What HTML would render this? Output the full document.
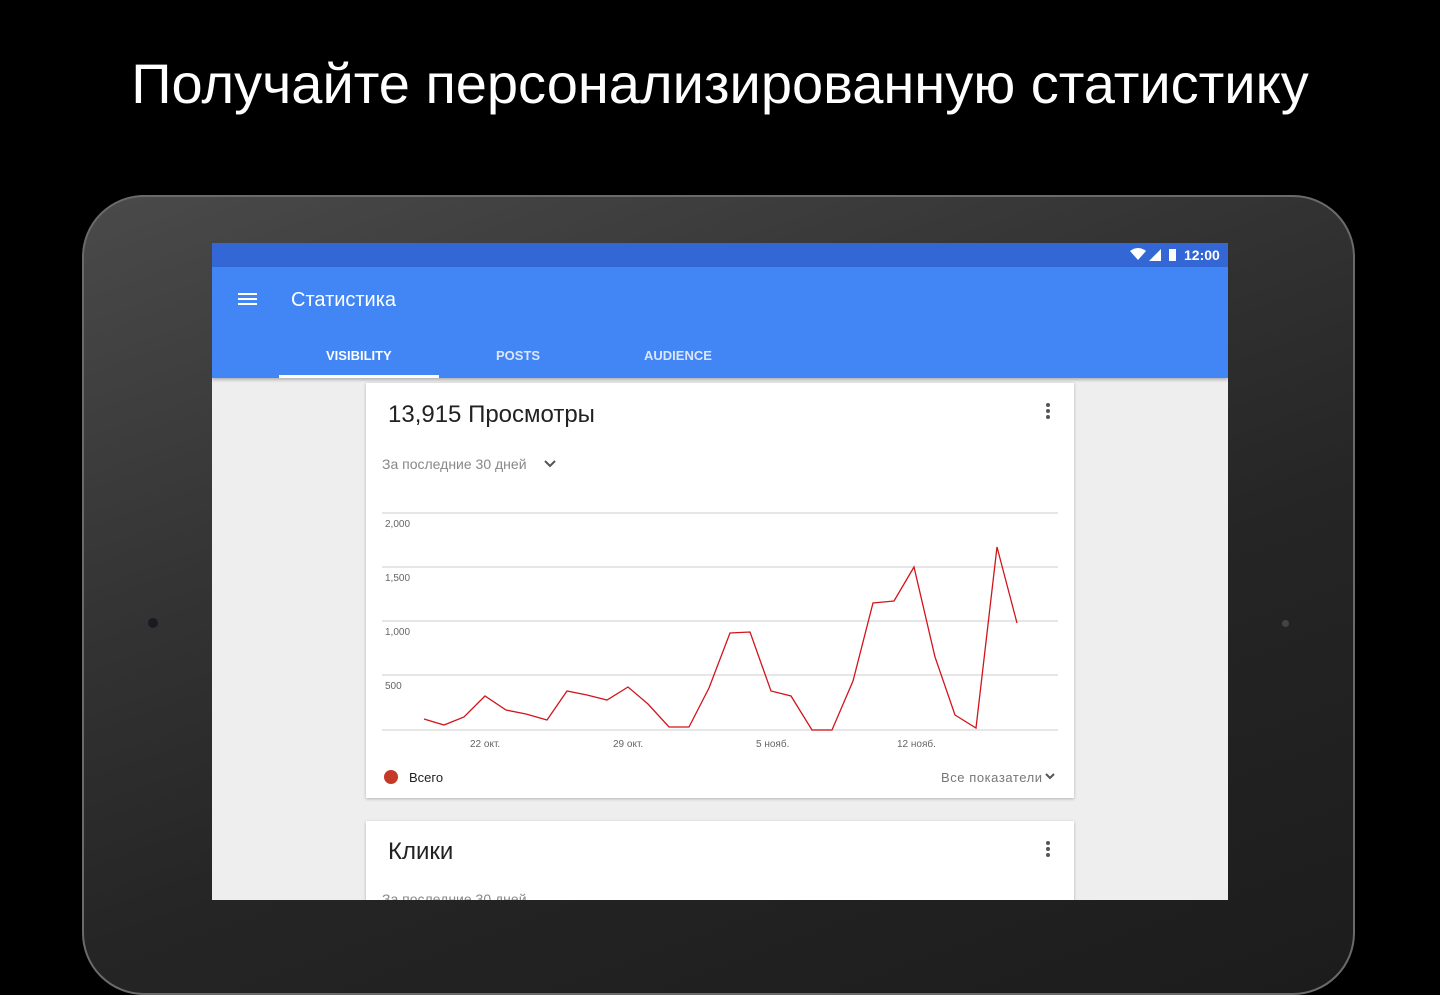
<!DOCTYPE html>
<html><head><meta charset="utf-8"><style>
*{margin:0;padding:0;box-sizing:border-box}
body{width:1440px;height:900px;overflow:hidden;background:#000;font-family:"Liberation Sans",sans-serif;position:relative}
.h{position:absolute;top:51px;left:0;width:1440px;text-align:center;color:#fff;font-size:56px;font-weight:300;letter-spacing:0px}
.tab{position:absolute;left:82px;top:195px;width:1273px;height:800px;border-radius:62px;background:linear-gradient(160deg,#4a4a4a 0%,#333 35%,#252525 60%,#1c1c1c 100%);border:2px solid #6a6a6a}
.scr{position:absolute;left:212px;top:243px;width:1016px;height:657px;background:#eee;overflow:hidden}
.sb{height:24px;background:#3367d6;position:relative}
.tb{height:111px;background:#4285f4;position:relative;box-shadow:0 2px 3px rgba(0,0,0,.25)}
.card{position:absolute;left:154px;width:708px;background:#fff;box-shadow:0 1px 3px rgba(0,0,0,.25)}
.t{position:absolute;color:#fff}
</style></head><body>
<div class="h">Получайте персонализированную статистику</div>
<div class="tab"></div>
<div style="position:absolute;left:147px;top:617px;width:12px;height:12px;border-radius:50%;background:#1a1a22;border:1px solid #333"></div>
<div style="position:absolute;left:1282px;top:620px;width:7px;height:7px;border-radius:50%;background:#444"></div>
<div class="scr">
 <div class="sb">
  <svg style="position:absolute;left:918px;top:5px" width="50" height="15"><path d="M0 3 Q8 -3 16 3 L8 12Z" fill="#fff"/><path d="M19 13 L31 1 L31 13Z" fill="#fff"/><rect x="39" y="1" width="7" height="12" fill="#fff"/></svg>
  <div class="t" style="left:972px;top:4px;font-size:14px;font-weight:bold">12:00</div>
 </div>
 <div class="tb">
  <div style="position:absolute;left:26px;top:26px;width:19px;height:2px;background:#fff;box-shadow:0 5px 0 #fff,0 10px 0 #fff"></div>
  <div class="t" style="left:79px;top:22px;font-size:20px">Статистика</div>
  <div class="t" style="left:114px;top:81px;font-size:13px;font-weight:bold">VISIBILITY</div>
  <div class="t" style="left:284px;top:81px;font-size:13px;font-weight:bold;color:#dbe6fd">POSTS</div>
  <div class="t" style="left:432px;top:81px;font-size:13px;font-weight:bold;color:#dbe6fd">AUDIENCE</div>
  <div style="position:absolute;left:67px;top:108px;width:160px;height:3px;background:#fff"></div>
 </div>
 <div class="card" style="top:140px;height:415px">
  <div style="position:absolute;left:22px;top:18px;font-size:24px;color:#222;font-weight:300">13,915 Просмотры</div>
  <div style="position:absolute;left:680px;top:20px;width:4px;height:4px;border-radius:50%;background:#555;box-shadow:0 6px 0 #555,0 12px 0 #555"></div>
  <div style="position:absolute;left:16px;top:73px;font-size:14px;color:#888">За последние 30 дней</div>
  <svg style="position:absolute;left:178px;top:77px" width="12" height="8"><path d="M1 1 L6 6 L11 1" stroke="#555" stroke-width="2" fill="none"/></svg>
 </div>
 <div class="card" style="top:578px;height:100px">
  <div style="position:absolute;left:22px;top:17px;font-size:24px;color:#222;font-weight:300">Клики</div>
  <div style="position:absolute;left:680px;top:20px;width:4px;height:4px;border-radius:50%;background:#555;box-shadow:0 6px 0 #555,0 12px 0 #555"></div>
  <div style="position:absolute;left:16px;top:70px;font-size:14px;color:#888">За последние 30 дней</div>
 </div>
</div>
<svg style="position:absolute;left:0;top:0" width="1440" height="900">
 <g stroke="#ddd" stroke-width="1.5"><line x1="382" y1="513" x2="1058" y2="513"/><line x1="382" y1="567" x2="1058" y2="567"/><line x1="382" y1="621" x2="1058" y2="621"/><line x1="382" y1="675" x2="1058" y2="675"/><line x1="382" y1="730" x2="1058" y2="730"/></g>
 <g font-family="Liberation Sans" font-size="10" fill="#666"><text x="385" y="527">2,000</text><text x="385" y="581">1,500</text><text x="385" y="635">1,000</text><text x="385" y="689">500</text>
 <text x="470" y="747">22 окт.</text><text x="613" y="747">29 окт.</text><text x="756" y="747">5 нояб.</text><text x="897" y="747">12 нояб.</text></g>
 <polyline fill="none" stroke="#d0151b" stroke-width="1.3" points="424,719 444,725 464,717 485,696 506,710 526,714 547,720 567,691 587,695 607,700 628,687 648,704 669,727 689,727 709,688 730,633 750,632 771,691 791,696 812,730 832,730 853,681 873,603 894,601 914,567 935,657 955,715 976,728 997,547 1017,623"/>
 <circle cx="391" cy="777" r="7" fill="#c53929"/>
 <text x="409" y="782" font-family="Liberation Sans" font-size="13" fill="#222">Всего</text>
 <text x="941" y="782" font-family="Liberation Sans" font-size="13" fill="#777" textLength="101">Все показатели</text>
 <path d="M1046 774 L1050 778 L1054 774" stroke="#555" stroke-width="2" fill="none"/>
</svg>
</body></html>
